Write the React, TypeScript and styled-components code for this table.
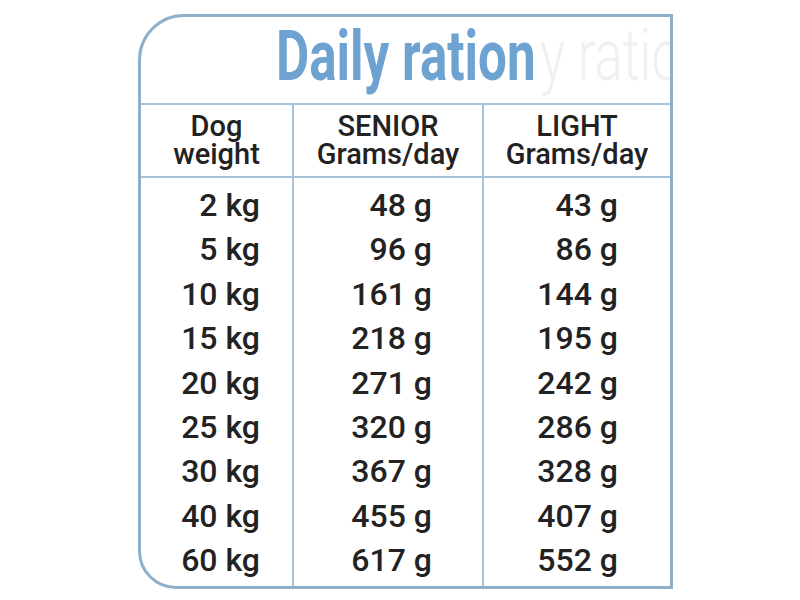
import styled, { createGlobalStyle } from "styled-components";

const GlobalStyle = createGlobalStyle`
  * {
    box-sizing: border-box;
  }
  body {
    margin: 0;
    background: #ffffff;
    font-family: Roboto, "Liberation Sans", sans-serif;
  }
`;

const Page = styled.div`
  width: 800px;
  height: 600px;
  padding: 14px 0 0 138px;
`;

const Card = styled.div`
  width: 535px;
  height: 575px;
  border: 3px solid #8cafcc;
  border-radius: 46px 0 0 38px;
  display: flex;
  flex-direction: column;
  overflow: hidden;
  background: #ffffff;
`;

const TitleBar = styled.div`
  position: relative;
  height: 86px;
  display: flex;
  justify-content: center;
  padding-top: 4px;
`;

const Title = styled.h1`
  position: relative;
  margin: 0;
  font-size: 70px;
  line-height: 70px;
  font-weight: 700;
  color: #6ea2d1;
  white-space: nowrap;
  transform: scaleX(0.73);
`;

// faint bleed-through of the title from the scan, cut by the card edge
const GhostTitle = styled.div`
  position: absolute;
  top: 4px;
  left: 399px;
  font-size: 72px;
  line-height: 70px;
  font-weight: 300;
  color: #eef1f4;
  white-space: nowrap;
  transform: scaleX(0.73);
  transform-origin: left center;
`;

const Table = styled.div`
  flex: 1;
  display: flex;
  border-top: 2px solid #a7c3dc;
`;

const Column = styled.div<{ $width?: number }>`
  display: flex;
  flex-direction: column;
  width: ${(p) => (p.$width ? `${p.$width}px` : "auto")};
  flex: ${(p) => (p.$width ? "none" : "1")};
  & + & {
    border-left: 2px solid #a7c3dc;
  }
`;

const HeadCell = styled.div`
  height: 73px;
  border-bottom: 2px solid #a7c3dc;
  display: flex;
  flex-direction: column;
  align-items: center;
  justify-content: center;
  padding-bottom: 1px;
  font-size: 29px;
  line-height: 28px;
  font-weight: 500;
  color: #222222;
  text-align: center;
`;

const HeadLine = styled.span`
  white-space: nowrap;
`;

const Values = styled.div<{ $right: number }>`
  padding: 5px ${(p) => p.$right}px 0 0;
  text-align: right;
  font-size: 32px;
  line-height: 44.4px;
  font-weight: 500;
  color: #222222;
`;

const Value = styled.div`
  white-space: nowrap;
`;

const weights = [2, 5, 10, 15, 20, 25, 30, 40, 60];
const senior = [48, 96, 161, 218, 271, 320, 367, 455, 617];
const light = [43, 86, 144, 195, 242, 286, 328, 407, 552];

export default function App() {
  return (
    <>
      <GlobalStyle />
      <Page>
        <Card>
          <TitleBar>
            <GhostTitle aria-hidden="true">y ratio</GhostTitle>
            <Title>Daily ration</Title>
          </TitleBar>
          <Table>
            <Column $width={151}>
              <HeadCell>
                <HeadLine>Dog</HeadLine>
                <HeadLine>weight</HeadLine>
              </HeadCell>
              <Values $right={32}>
                {weights.map((w) => (
                  <Value key={w}>{w} kg</Value>
                ))}
              </Values>
            </Column>
            <Column $width={190}>
              <HeadCell>
                <HeadLine>SENIOR</HeadLine>
                <HeadLine>Grams/day</HeadLine>
              </HeadCell>
              <Values $right={50}>
                {senior.map((g) => (
                  <Value key={g}>{g} g</Value>
                ))}
              </Values>
            </Column>
            <Column>
              <HeadCell>
                <HeadLine>LIGHT</HeadLine>
                <HeadLine>Grams/day</HeadLine>
              </HeadCell>
              <Values $right={52}>
                {light.map((g) => (
                  <Value key={g}>{g} g</Value>
                ))}
              </Values>
            </Column>
          </Table>
        </Card>
      </Page>
    </>
  );
}
